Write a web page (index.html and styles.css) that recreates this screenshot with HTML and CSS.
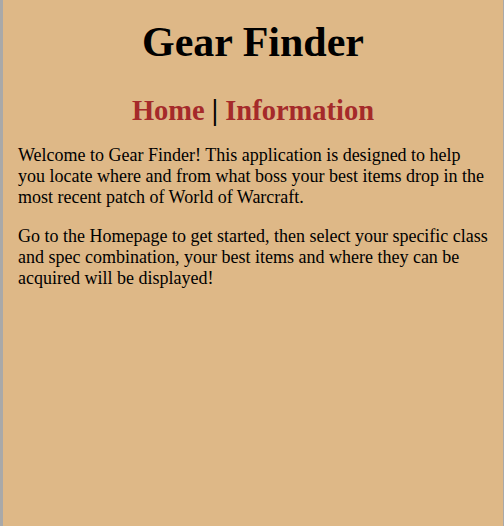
FILE: index.html
```html
<!DOCTYPE html>
<html lang="en">
<head>
<meta charset="utf-8">
<title>Gear Finder - Information</title>
<link rel="stylesheet" href="styles.css">
</head>
<body>
<div class="page">
  <h1 class="title">Gear Finder</h1>
  <nav class="nav">
    <a href="#" class="nav-link">Home</a> | <a href="#" class="nav-link">Information</a>
  </nav>
  <p class="text">Welcome to Gear Finder! This application is designed to help you locate where and from what boss your best items drop in the most recent patch of World of Warcraft.</p>
  <p class="text">Go to the Homepage to get started, then select your specific class and spec combination, your best items and where they can be acquired will be displayed!</p>
</div>
</body>
</html>
```
FILE: styles.css
```css
html, body {
  margin: 0;
  padding: 0;
  background: #a9a9a9;
}
.page {
  margin: 0 1px 0 3px;
  min-height: 526px;
  box-sizing: border-box;
  background: #deb887;
  padding: 1px 15px;
  font-family: "Liberation Serif", "Times New Roman", serif;
  color: #000;
}
.title {
  font-size: 42px;
  font-weight: bold;
  text-align: center;
  margin: 17px 0 0;
  line-height: 48px;
}
.nav {
  font-size: 28.5px;
  font-weight: bold;
  text-align: center;
  margin: 28px 0 0;
  line-height: 33px;
}
.nav-link {
  color: #a52a2a;
  text-decoration: none;
}
.text {
  font-size: 18px;
  margin: 18px 0;
}
```
